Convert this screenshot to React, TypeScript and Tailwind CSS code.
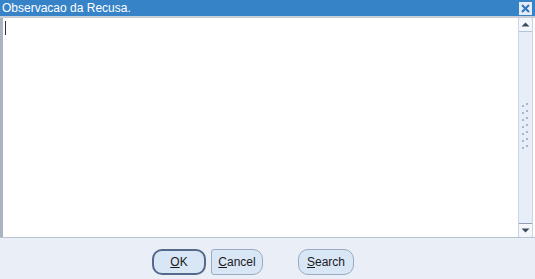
import React from "react";

const Btn: React.FC<{ u: string; rest: string; w: string; focused?: boolean; flatLeft?: boolean }> = ({
  u,
  rest,
  w,
  focused,
  flatLeft,
}) => (
  <button
    className={`${w} h-[26px] ${flatLeft ? "rounded-l-[3px] rounded-r-[10px]" : "rounded-[10px]"} ${
      focused ? "border-[2px] border-[#55698a]" : "border border-[#9aaac0]"
    } bg-[#d9e6f6] text-[12px] text-[#1a1a1a] flex items-center justify-center`}
  >
    <span className="underline underline-offset-1">{u}</span>
    {rest}
  </button>
);

export default function App() {
  return (
    <div className="w-[535px] h-[279px] bg-[#eaeff7] flex flex-col font-['Liberation_Sans',Arial,sans-serif] overflow-hidden">
      <div className="h-[16px] bg-[#3783c7] flex items-center justify-between pl-[2px] pr-[3px]">
        <span className="text-white text-[12px] leading-none">Observacao da Recusa.</span>
        <div className="w-[13px] h-[13px] bg-[#e3ecf8] flex items-center justify-center">
          <svg width="9" height="9" viewBox="0 0 9 9">
            <path d="M1 1 L8 8 M8 1 L1 8" stroke="#2f76bd" strokeWidth="2" />
          </svg>
        </div>
      </div>
      <div className="h-[2px] bg-[#c9ced6]" />
      <div className="flex h-[220px] bg-white border-b border-[#b8c4d4]">
        <div className="flex-1 border-l-[3px] border-[#a9b3c1] pl-[2px] pt-[3px]">
          <div className="w-[1px] h-[14px] bg-[#333]" />
        </div>
        <div className="w-[15px] mr-[2px] flex flex-col bg-[#e7eef8] border-x border-[#c9d6e7]">
          <div className="h-[14px] flex flex-col items-center justify-center border-b border-[#b5c3d6] rounded-t-[3px] bg-[#f3f7fc]">
            <svg width="9" height="5" viewBox="0 0 9 5">
              <path d="M0.5 4.5 L4.5 0.5 L8.5 4.5 Z" fill="#3d4a5c" />
            </svg>
          </div>
          <div className="flex-1 flex items-center justify-center">
            <svg width="9" height="52" viewBox="0 0 9 52">
              {Array.from({ length: 7 }).map((_, i) => (
                <g key={i} fill="#a6b6cb">
                  <rect x="1" y={i * 7 + 3} width="2" height="2" />
                  <rect x="5" y={i * 7 + 1} width="2" height="2" />
                </g>
              ))}
            </svg>
          </div>
          <div className="h-[14px] flex items-center justify-center border-t border-[#8f9fb6] rounded-b-[3px] bg-[#f3f7fc]">
            <svg width="9" height="5" viewBox="0 0 9 5">
              <path d="M0.5 0.5 L4.5 4.5 L8.5 0.5 Z" fill="#3d4a5c" />
            </svg>
          </div>
        </div>
      </div>
      <div className="flex-1 flex items-start pt-[11px] pl-[152px]">
        <Btn u="O" rest="K" w="w-[54px]" focused />
        <div className="w-[5px]" />
        <Btn u="C" rest="ancel" w="w-[52px]" flatLeft />
        <div className="w-[35px]" />
        <Btn u="S" rest="earch" w="w-[56px]" />
      </div>
    </div>
  );
}
